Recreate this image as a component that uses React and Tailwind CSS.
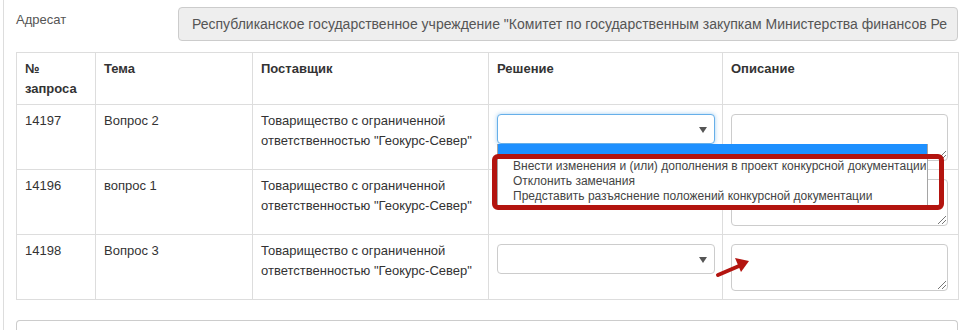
import React from 'react';

const rows = [
  { id: '14197', topic: 'Вопрос 2', open: true },
  { id: '14196', topic: 'вопрос 1' },
  { id: '14198', topic: 'Вопрос 3', select: true },
];

const options = [
  'Внести изменения и (или) дополнения в проект конкурсной документации',
  'Отклонить замечания',
  'Представить разъяснение положений конкурсной документации',
];

const Caret = () => (
  <svg width="8" height="6" viewBox="0 0 8 6" className="absolute right-[7px] top-[12px]">
    <polygon points="0,0 8,0 4,6" fill="#555" />
  </svg>
);

const Grip = () => (
  <svg width="9" height="9" viewBox="0 0 9 9" className="absolute right-[1px] bottom-[1px]">
    <line x1="1" y1="9" x2="9" y2="1" stroke="#777" strokeWidth="1" />
    <line x1="5" y1="9" x2="9" y2="5" stroke="#777" strokeWidth="1" />
  </svg>
);

const SelectBox = ({ open }) => (
  <div className="relative mt-[3px] w-[218px]">
    <div
      className={
        'relative h-[30px] rounded-[4px] bg-white ' +
        (open ? 'border border-[#66afe9] shadow-[0_0_4px_rgba(102,175,233,0.6)]' : 'h-[29px] border border-[#ccc]')
      }
    >
      <Caret />
    </div>
    {open && (
      <>
        <div className="absolute left-0 top-[30px] z-10 w-[431px] h-[62px] bg-white border-x border-b border-[#a5a5a5]">
          <div className="h-[11px] bg-[#1e90ff]" />
          <div className="pl-[15px] pt-[4px] text-[12px] leading-[15px] text-[#444] whitespace-nowrap">
            {options.map(o => (
              <div key={o}>{o}</div>
            ))}
          </div>
        </div>
        <div className="absolute left-[-5px] top-[40px] z-20 w-[452px] h-[56px] border-[5px] border-[#b3140f] rounded-[6px]" />
      </>
    )}
  </div>
);

const TextArea = () => (
  <div className="relative mt-[3px] w-[217px] h-[47px] rounded-[4px] border border-[#ccc] bg-white">
    <Grip />
  </div>
);

export default function App() {
  const cell = 'border border-[#ddd] px-[8px] pt-[6px] align-top';
  return (
    <div
      className="relative w-[969px] h-[330px] overflow-hidden bg-white text-[13px] leading-[20px] text-[#333]"
      style={{ fontFamily: '"Liberation Sans", Arial, sans-serif' }}
    >
      <div className="ml-[3px] h-full border-l border-[#ddd] pl-[12px] pt-[7px] w-[955px]">
        <div className="flex items-start">
          <div className="w-[162px] pt-[3px] text-[#555]">Адресат</div>
          <div className="h-[34px] w-[780px] flex items-center rounded-[4px] border border-[#ccc] bg-[#eee] pl-[13px] text-[14px] text-[#555] whitespace-nowrap overflow-hidden">
            Республиканское государственное учреждение "Комитет по государственным закупкам Министерства финансов Ре
          </div>
        </div>

        <table className="mt-[11px] w-[942px] border-collapse table-fixed">
          <colgroup>
            <col className="w-[79px]" />
            <col className="w-[157px]" />
            <col className="w-[236px]" />
            <col className="w-[234px]" />
            <col className="w-[236px]" />
          </colgroup>
          <thead>
            <tr className="h-[52px] font-bold">
              <th className={cell + ' text-left'}>№<br />запроса</th>
              <th className={cell + ' text-left'}>Тема</th>
              <th className={cell + ' text-left'}>Поставщик</th>
              <th className={cell + ' text-left'}>Решение</th>
              <th className={cell + ' text-left'}>Описание</th>
            </tr>
          </thead>
          <tbody>
            {rows.map(r => (
              <tr key={r.id} className="h-[65px]">
                <td className={cell}>{r.id}</td>
                <td className={cell}>{r.topic}</td>
                <td className={cell}>
                  Товарищество с ограниченной ответственностью "Геокурс-Север"
                </td>
                <td className={cell}>
                  {(r.open || r.select) && <SelectBox open={r.open} />}
                </td>
                <td className={cell}>
                  <TextArea />
                </td>
              </tr>
            ))}
          </tbody>
        </table>

        <div className="mt-[20px] w-[942px] h-[20px] rounded-t-[4px] border-x border-t border-[#ccc]" />
      </div>

      <svg width="46" height="30" viewBox="0 0 46 30" className="absolute left-[705px] top-[252px] z-20">
        <line x1="13" y1="23" x2="34" y2="14" stroke="#b3140f" strokeWidth="4" strokeLinecap="round" />
        <polygon points="44,9 30,6 36,20" fill="#b3140f" />
      </svg>
    </div>
  );
}
